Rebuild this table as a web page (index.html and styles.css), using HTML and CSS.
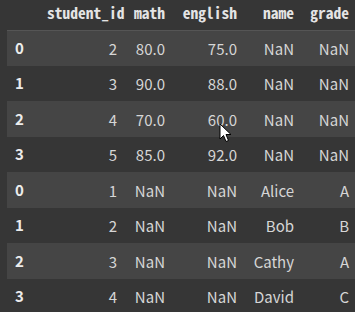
FILE: index.html
```html
<!DOCTYPE html>
<html>
<head>
<meta charset="utf-8">
<link rel="stylesheet" href="styles.css">
</head>
<body>
<div class="wrap">
<table class="df">
  <colgroup>
    <col class="c-idx"><col class="c-sid"><col class="c-math"><col class="c-eng"><col class="c-name"><col class="c-grade">
  </colgroup>
  <thead>
    <tr><th></th><th>student_id</th><th>math</th><th>english</th><th>name</th><th>grade</th></tr>
  </thead>
  <tbody>
    <tr><th>0</th><td>2</td><td>80.0</td><td>75.0</td><td>NaN</td><td>NaN</td></tr>
    <tr><th>1</th><td>3</td><td>90.0</td><td>88.0</td><td>NaN</td><td>NaN</td></tr>
    <tr><th>2</th><td>4</td><td>70.0</td><td>60.0</td><td>NaN</td><td>NaN</td></tr>
    <tr><th>3</th><td>5</td><td>85.0</td><td>92.0</td><td>NaN</td><td>NaN</td></tr>
    <tr><th>0</th><td>1</td><td>NaN</td><td>NaN</td><td>Alice</td><td>A</td></tr>
    <tr><th>1</th><td>2</td><td>NaN</td><td>NaN</td><td>Bob</td><td>B</td></tr>
    <tr><th>2</th><td>3</td><td>NaN</td><td>NaN</td><td>Cathy</td><td>A</td></tr>
    <tr><th>3</th><td>4</td><td>NaN</td><td>NaN</td><td>David</td><td>C</td></tr>
  </tbody>
</table>
<svg class="cursor" width="13" height="20" viewBox="0 0 13 20">
  <path d="M1 1 L1 16 L4.5 12.5 L7 18.5 L9.5 17.5 L7 11.5 L12 11.5 Z" fill="#fff" stroke="#000" stroke-width="1" stroke-linejoin="round"/>
</svg>
</div>
</body>
</html>
```
FILE: styles.css
```css
html, body {
  margin: 0;
  padding: 0;
  background: #363636;
  overflow: hidden;
}
.wrap {
  position: relative;
  padding-left: 7px;
  width: 355px;
  height: 312px;
}
.df {
  border-collapse: collapse;
  table-layout: fixed;
  width: 350px;
  font-family: "Noto Sans CJK JP", "Noto Sans", sans-serif;
  font-size: 15px;
  color: #d6d6d6;
}
.c-idx { width: 40px; }
.c-sid { width: 78px; }
.c-math { width: 48px; }
.c-eng { width: 72px; }
.c-name { width: 57px; }
.c-grade { width: 55px; }
.df th, .df td {
  padding: 0 8px 0 0;
  text-align: right;
  white-space: nowrap;
  line-height: 20px;
}
.df thead tr {
  height: 30px;
  border-bottom: 1px solid #555;
}
.df thead th {
  font-family: "Noto Sans Mono CJK JP", "DejaVu Sans Mono", monospace;
  font-weight: bold;
  font-size: 15.5px;
  color: #e4e4e4;
  vertical-align: top;
  padding-top: 2px;
}
.df tbody tr {
  height: 35.5px;
}
.df tbody tr:nth-child(odd) {
  background: #454545;
}
.df tbody th {
  text-align: left;
  padding-left: 8px;
  font-weight: bold;
  color: #ececec;
}
.df tbody td {
  padding-top: 2px;
}
.cursor {
  position: absolute;
  left: 219px;
  top: 123px;
}
```
